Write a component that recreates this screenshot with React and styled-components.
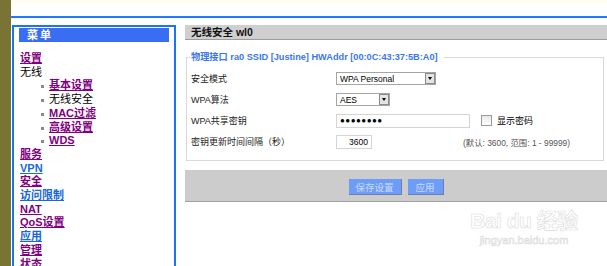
import React from "react";
import styled, { createGlobalStyle } from "styled-components";

const GlobalStyle = createGlobalStyle`
  html, body {
    margin: 0;
    padding: 0;
    background: #fff;
  }
  body {
    width: 607px;
    height: 266px;
    overflow: hidden;
    font-family: "Liberation Sans", "Noto Sans CJK SC", sans-serif;
  }
`;

const Page = styled.div`
  display: flex;
  height: 266px;
`;

const Strip = styled.div`
  width: 11px;
  flex-shrink: 0;
  background: #7a7434;
`;

const Main = styled.div`
  flex: 1;
  display: flex;
  flex-direction: column;
  min-width: 0;
`;

const TopBand = styled.div`
  height: 16px;
  flex-shrink: 0;
  border-bottom: 2px solid #1f7bff;
  background: linear-gradient(#fffdf0 0 3px, #fff 3px);
`;

const Body = styled.div`
  flex: 1;
  min-height: 0;
  overflow: hidden;
  display: flex;
  padding-top: 7px;
  position: relative;
`;

const MenuPanel = styled.div`
  width: 164px;
  box-sizing: border-box;
  margin-left: 1px;
  border: 2px solid #1a73ff;
  border-bottom: none;
  padding: 1px 5px 0;
  flex-shrink: 0;
`;

const MenuHead = styled.div`
  height: 14px;
  line-height: 14px;
  background: #3a6ef2;
  color: #fff;
  font-weight: bold;
  font-size: 11px;
  padding-left: 8px;
  letter-spacing: 2px;
`;

const MenuList = styled.ul`
  list-style: none;
  margin: 10px 0 0;
  padding: 0 0 0 1px;
  font-size: 11px;
  font-weight: bold;
  line-height: 13.7px;
`;

const MenuItem = styled.li`
  padding-left: ${(p) => (p.$sub ? "29px" : "0")};
  position: relative;
  ${(p) =>
    p.$sub &&
    `&::before {
      content: "";
      position: absolute;
      left: 21px;
      top: 6px;
      width: 3px;
      height: 3px;
      background: #8a8a8a;
    }`}
`;

const MenuLink = styled.a`
  color: ${(p) => (p.$tone === "blue" ? "#1768d8" : p.$tone === "black" ? "#000" : "#800080")};
  text-decoration: ${(p) => (p.$tone === "black" ? "none" : "underline")};
  font-weight: ${(p) => (p.$tone === "black" ? "normal" : "bold")};
`;

const Content = styled.div`
  flex: 1;
  margin-left: 9px;
  display: flex;
  flex-direction: column;
`;

const TitleBar = styled.div`
  height: 14px;
  line-height: 14px;
  background: #cfcfcf;
  border-bottom: 1px solid #9c9c9c;
  padding-left: 6px;
  font-size: 10.5px;
  font-weight: bold;
  color: #111;
`;

const Fieldset = styled.fieldset`
  margin: 11px 3px 0 1px;
  padding: 0 0 8px 4px;
  border: 1px solid #d9d9d9;
  min-width: 0;
`;

const Legend = styled.legend`
  padding: 0 6px 0 1px;
  margin-left: -1px;
  font-size: 9.2px;
  font-weight: bold;
  color: #3a78ea;
  line-height: 12px;
`;

const Form = styled.div`
  display: grid;
  grid-template-columns: 145px 1fr;
  grid-auto-rows: 21px;
  align-items: center;
  margin-top: 5px;
  font-size: 9px;
  color: #222;
`;

const Label = styled.div`
  white-space: nowrap;
`;

const Cell = styled.div`
  display: flex;
  align-items: center;
`;

const Select = styled.div`
  width: ${(p) => p.$w}px;
  height: 13px;
  box-sizing: border-box;
  border: 1px solid #a5a5a5;
  background: #fff;
  display: flex;
  align-items: center;
  font-size: 8.5px;
  color: #000;
  span {
    flex: 1;
    padding-left: 3px;
  }
`;

const Drop = styled.div`
  width: 10px;
  height: 11px;
  box-sizing: border-box;
  border: 1px solid #8a8a8a;
  background: #e4e4e4;
  display: flex;
  align-items: center;
  justify-content: center;
  &::after {
    content: "";
    border-left: 2.5px solid transparent;
    border-right: 2.5px solid transparent;
    border-top: 3px solid #000;
  }
`;

const Input = styled.div`
  width: ${(p) => p.$w}px;
  height: 14px;
  box-sizing: border-box;
  border: 1px solid #d4d4d4;
  display: flex;
  align-items: center;
  justify-content: ${(p) => (p.$right ? "flex-end" : "flex-start")};
  padding: 0 3px;
  font-size: ${(p) => (p.$dots ? "8px" : "8.5px")};
  letter-spacing: ${(p) => (p.$dots ? "0.5px" : "0")};
  color: #000;
`;

const Check = styled.span`
  width: 9px;
  height: 9px;
  border: 1px solid #9a9a9a;
  background: linear-gradient(#e8e8e8, #fff);
  margin: 0 5px 0 11px;
`;

const Note = styled.span`
  margin-left: ${(p) => p.$gap}px;
  color: ${(p) => p.$color || "#000"};
  font-size: ${(p) => (p.$small ? "8.4px" : "9px")};
  white-space: nowrap;
`;

const ActionBar = styled.div`
  margin-top: 9px;
  height: 32px;
  box-sizing: border-box;
  background: #cccccc;
  border-bottom: 1px solid #a2a2a2;
  display: flex;
  justify-content: center;
  gap: 6px;
  padding-top: 9px;
`;

const Button = styled.button`
  width: ${(p) => p.$w}px;
  height: 16px;
  padding: 0;
  border: none;
  border-right: 1px solid #6b7fa8;
  border-bottom: 1px solid #6b7fa8;
  background: #6d9df7;
  color: #c9dbff;
  font-family: inherit;
  font-size: 9.5px;
`;

const Watermark = styled.div`
  position: absolute;
  left: 454px;
  top: 190px;
  width: 118px;
  color: #fff;
  -webkit-text-stroke: 0.6px #dcdcdc;
  text-align: center;
  pointer-events: none;
  .brand {
    font-size: 21px;
    font-weight: bold;
    letter-spacing: -0.5px;
    line-height: 26px;
    white-space: nowrap;
  }
  .site {
    font-size: 11px;
    line-height: 13px;
  }
`;

const menu = [
  { text: "设置", tone: "purple" },
  { text: "无线", tone: "black" },
  { text: "基本设置", tone: "purple", sub: true },
  { text: "无线安全", tone: "black", sub: true },
  { text: "MAC过滤", tone: "purple", sub: true },
  { text: "高级设置", tone: "purple", sub: true },
  { text: "WDS", tone: "purple", sub: true },
  { text: "服务", tone: "purple" },
  { text: "VPN", tone: "blue" },
  { text: "安全", tone: "purple" },
  { text: "访问限制", tone: "blue" },
  { text: "NAT", tone: "purple" },
  { text: "QoS设置", tone: "purple" },
  { text: "应用", tone: "blue" },
  { text: "管理", tone: "purple" },
  { text: "状态", tone: "purple" },
];

export default function App() {
  return (
    <>
      <GlobalStyle />
      <Page>
        <Strip />
        <Main>
          <TopBand />
          <Body>
            <MenuPanel>
              <MenuHead>菜单</MenuHead>
              <MenuList>
                {menu.map((m) => (
                  <MenuItem key={m.text} $sub={m.sub}>
                    <MenuLink href="#" $tone={m.tone}>
                      {m.text}
                    </MenuLink>
                  </MenuItem>
                ))}
              </MenuList>
            </MenuPanel>
            <Content>
              <TitleBar>无线安全 wl0</TitleBar>
              <Fieldset>
                <Legend>物理接口 ra0 SSID [Justine] HWAddr [00:0C:43:37:5B:A0]</Legend>
                <Form>
                  <Label>安全模式</Label>
                  <Cell>
                    <Select $w={100}>
                      <span>WPA Personal</span>
                      <Drop />
                    </Select>
                  </Cell>
                  <Label>WPA算法</Label>
                  <Cell>
                    <Select $w={54}>
                      <span>AES</span>
                      <Drop />
                    </Select>
                  </Cell>
                  <Label>WPA共享密钥</Label>
                  <Cell>
                    <Input $w={134} $dots>●●●●●●●●</Input>
                    <Check />
                    <Note $gap={0}>显示密码</Note>
                  </Cell>
                  <Label>密钥更新时间间隔（秒）</Label>
                  <Cell>
                    <Input $w={36} $right>3600</Input>
                    <Note $gap={91} $color="#555" $small>(默认: 3600, 范围: 1 - 99999)</Note>
                  </Cell>
                </Form>
              </Fieldset>
              <ActionBar>
                <Button $w={53}>保存设置</Button>
                <Button $w={36}>应用</Button>
              </ActionBar>
            </Content>
            <Watermark>
              <div className="brand">Bai du 经验</div>
              <div className="site">jingyan.baidu.com</div>
            </Watermark>
          </Body>
        </Main>
      </Page>
    </>
  );
}
